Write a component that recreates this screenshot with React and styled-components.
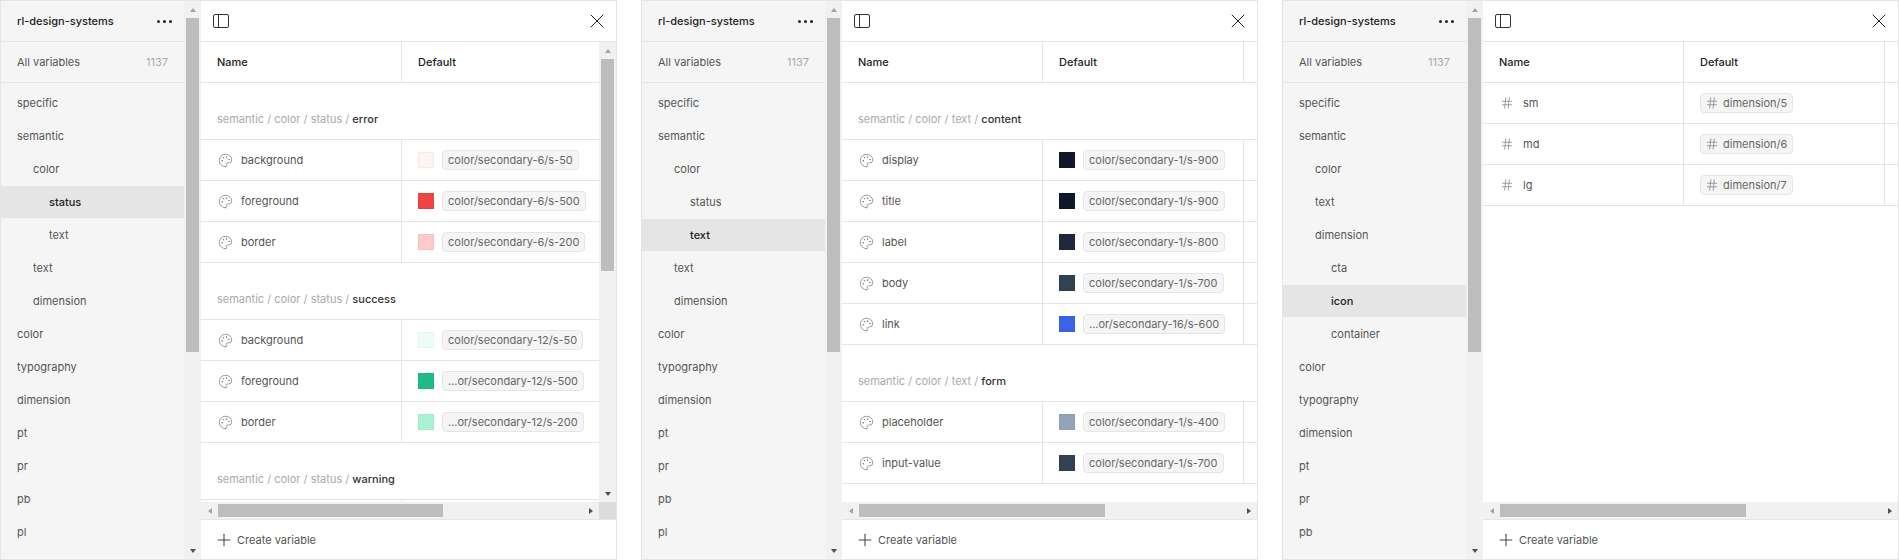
import React from "react";
import styled, { createGlobalStyle } from "styled-components";
import { Palette, Hash, X, Plus } from "lucide-react";

const GlobalStyle = createGlobalStyle`
  html, body {
    margin: 0;
    padding: 0;
    background: #fff;
  }
  body {
    font-family: Inter, "Liberation Sans", sans-serif;
    font-size: 11px;
    line-height: 16px;
    color: #555;
  }
`;

// Sidebar trees for the three panels
const topItems = ["color", "typography", "dimension", "pt", "pr", "pb", "pl"];

const sidebars = [
  [
    { label: "specific", depth: 0 },
    { label: "semantic", depth: 0 },
    { label: "color", depth: 1 },
    { label: "status", depth: 2, active: true },
    { label: "text", depth: 2 },
    { label: "text", depth: 1 },
    { label: "dimension", depth: 1 },
  ],
  [
    { label: "specific", depth: 0 },
    { label: "semantic", depth: 0 },
    { label: "color", depth: 1 },
    { label: "status", depth: 2 },
    { label: "text", depth: 2, active: true },
    { label: "text", depth: 1 },
    { label: "dimension", depth: 1 },
  ],
  [
    { label: "specific", depth: 0 },
    { label: "semantic", depth: 0 },
    { label: "color", depth: 1 },
    { label: "text", depth: 1 },
    { label: "dimension", depth: 1 },
    { label: "cta", depth: 2 },
    { label: "icon", depth: 2, active: true },
    { label: "container", depth: 2 },
  ],
];

const colorRow = (name, color, value) => ({ name, color, value });

const panels = [
  {
    thumbX: 225,
    hasVScroll: true,
    groups: [
      {
        path: "semantic / color / status / ",
        leaf: "error",
        rows: [
          colorRow("background", "#fef2f2", "color/secondary-6/s-50"),
          colorRow("foreground", "#ef4444", "color/secondary-6/s-500"),
          colorRow("border", "#fecaca", "color/secondary-6/s-200"),
        ],
      },
      {
        path: "semantic / color / status / ",
        leaf: "success",
        rows: [
          colorRow("background", "#ecfdf5", "color/secondary-12/s-50"),
          colorRow("foreground", "#20bb84", "...or/secondary-12/s-500"),
          colorRow("border", "#a7f3d0", "...or/secondary-12/s-200"),
        ],
      },
      {
        path: "semantic / color / status / ",
        leaf: "warning",
        rows: [{}],
      },
    ],
  },
  {
    thumbX: 246,
    thirdColumn: true,
    groups: [
      {
        path: "semantic / color / text / ",
        leaf: "content",
        rows: [
          colorRow("display", "#0f172a", "color/secondary-1/s-900"),
          colorRow("title", "#0f172a", "color/secondary-1/s-900"),
          colorRow("label", "#1e293b", "color/secondary-1/s-800"),
          colorRow("body", "#334155", "color/secondary-1/s-700"),
          colorRow("link", "#3b63e8", "...or/secondary-16/s-600"),
        ],
      },
      {
        path: "semantic / color / text / ",
        leaf: "form",
        rows: [
          colorRow("placeholder", "#94a3b8", "color/secondary-1/s-400"),
          colorRow("input-value", "#334155", "color/secondary-1/s-700"),
        ],
      },
    ],
  },
  {
    thumbX: 246,
    thirdColumn: true,
    groups: [
      {
        rows: [
          { name: "sm", value: "dimension/5", numeric: true },
          { name: "md", value: "dimension/6", numeric: true },
          { name: "lg", value: "dimension/7", numeric: true },
        ],
      },
    ],
  },
];

const PanelIcon = () => (
  <svg width="18" height="16" viewBox="0 0 18 16" fill="none" stroke="#333" strokeWidth="1">
    <rect x="1.5" y="1.5" width="15" height="13" rx="1.5" />
    <line x1="6.5" y1="1.5" x2="6.5" y2="14.5" />
  </svg>
);

const App = () => (
  <Page>
    <GlobalStyle />
    {panels.map((panel, index) => (
      <Panel key={index}>
        <Sidebar>
          <SideContent>
            <SideHeader>
              <Project>rl-design-systems</Project>
              <Dots>
                <i />
                <i />
                <i />
              </Dots>
            </SideHeader>
            <AllRow>
              <span>All variables</span>
              <Count>1137</Count>
            </AllRow>
            <SideList>
              {sidebars[index]
                .concat(topItems.map((label) => ({ label, depth: 0 })))
                .slice(0, 14)
                .map((item, i) => (
                  <SideItem key={i} $depth={item.depth} $active={item.active}>
                    {item.label}
                  </SideItem>
                ))}
            </SideList>
          </SideContent>
          <VScroll>
            <Arrow $dir="up" $off />
            <VThumb $size={334} />
            <Arrow $dir="down" />
          </VScroll>
        </Sidebar>

        <Main>
          <TopBar>
            <PanelIcon />
            <X size={24} strokeWidth={1} color="#222" />
          </TopBar>

          <TableArea>
            <div>
              <Row>
                <NameCell>
                  <HeadText>Name</HeadText>
                </NameCell>
                <ValueCell $third={panel.thirdColumn}>
                  <HeadText>Default</HeadText>
                </ValueCell>
              </Row>
              {panel.groups.map((group, g) => (
                <div key={g}>
                  {group.leaf && (
                    <GroupLabel>
                      {group.path}
                      <b>{group.leaf}</b>
                    </GroupLabel>
                  )}
                  {group.rows.map((row, r) => (
                    <Row key={r}>
                      <NameCell>
                        {row.name && (
                          <>
                            <TypeIcon>
                              {row.numeric ? (
                                <Hash size={14} strokeWidth={1.4} color="#8a8a8a" />
                              ) : (
                                <Palette size={15} strokeWidth={1.25} color="#808080" />
                              )}
                            </TypeIcon>
                            <VarName>{row.name}</VarName>
                          </>
                        )}
                      </NameCell>
                      <ValueCell $third={panel.thirdColumn}>
                        {row.color && <Swatch $color={row.color} />}
                        {row.value && (
                          <Chip>
                            {row.numeric && <ChipHash size={14} strokeWidth={1.4} color="#8a8a8a" />}
                            {row.value}
                          </Chip>
                        )}
                      </ValueCell>
                    </Row>
                  ))}
                </div>
              ))}
            </div>
            {panel.hasVScroll && (
              <MainVScroll>
                <Arrow $dir="up" $off />
                <VThumb $size={212} />
                <Arrow $dir="down" />
              </MainVScroll>
            )}
          </TableArea>
          <HScroll>
            <Arrow $dir="left" $off />
            <HThumb $size={panel.thumbX} />
            <Arrow $dir="right" />
            {panel.hasVScroll && <Corner />}
          </HScroll>

          <Footer>
            <Plus size={20} strokeWidth={1.25} color="#444" />
            Create variable
          </Footer>
        </Main>
      </Panel>
    ))}
  </Page>
);

const Page = styled.div`
  display: flex;
  gap: 24px;
  width: 1899px;
  height: 560px;
  overflow: hidden;
`;

const Panel = styled.section`
  display: flex;
  box-sizing: border-box;
  width: 617px;
  height: 560px;
  flex: none;
  border: 1px solid #e5e5e5;
  overflow: hidden;
`;

const Sidebar = styled.aside`
  display: flex;
  flex: none;
  width: 200px;
  background: #f5f5f5;
`;

const SideContent = styled.div`
  width: 183px;
  overflow: hidden;
`;

const SideHeader = styled.div`
  display: flex;
  align-items: center;
  justify-content: space-between;
  height: 40px;
  padding: 0 12px 0 16px;
  border-bottom: 1px solid #e5e5e5;
`;

const Project = styled.span`
  font-weight: 500;
  color: #222;
`;

const Dots = styled.span`
  display: flex;
  gap: 3px;

  i {
    display: block;
    width: 3px;
    height: 3px;
    border-radius: 50%;
    background: #222;
  }
`;

const AllRow = styled.div`
  display: flex;
  align-items: center;
  justify-content: space-between;
  height: 40px;
  padding: 0 16px;
  border-bottom: 1px solid #e5e5e5;
`;

const Count = styled.span`
  color: #aaa;
`;

const SideList = styled.div`
  padding-top: 4px;
`;

const SideItem = styled.div`
  display: flex;
  align-items: center;
  height: 32px;
  margin-bottom: 1px;
  padding-left: ${({ $depth }) => 16 + $depth * 16}px;
  background: ${({ $active }) => ($active ? "#e5e5e5" : "transparent")};
  font-weight: ${({ $active }) => ($active ? 500 : 400)};
  color: ${({ $active }) => ($active ? "#222" : "#555")};
`;

const VScroll = styled.div`
  display: flex;
  flex-direction: column;
  flex: none;
  box-sizing: border-box;
  width: 17px;
  padding: 0 2px;
  background: #f1f1f1;
`;

const MainVScroll = styled(VScroll)`
  position: absolute;
  top: 0;
  right: 0;
  bottom: 0;
`;

const Arrow = styled.span`
  display: flex;
  align-items: center;
  justify-content: center;
  flex: none;
  width: ${({ $dir }) => ($dir === "up" || $dir === "down" ? "100%" : "17px")};
  height: ${({ $dir }) => ($dir === "up" || $dir === "down" ? "17px" : "100%")};

  &::before {
    content: "";
    border-style: solid;
    border-color: transparent;
    border-width: ${({ $dir }) => ($dir === "up" || $dir === "down" ? "4px 3.5px" : "3.5px 4px")};
    border-top-width: ${({ $dir }) => ($dir === "up" ? 0 : undefined)};
    border-bottom-width: ${({ $dir }) => ($dir === "down" ? 0 : undefined)};
    border-left-width: ${({ $dir }) => ($dir === "left" ? 0 : undefined)};
    border-right-width: ${({ $dir }) => ($dir === "right" ? 0 : undefined)};
    border-bottom-color: ${({ $dir, $off }) => ($dir === "up" ? ($off ? "#a3a3a3" : "#505050") : "transparent")};
    border-top-color: ${({ $dir }) => ($dir === "down" ? "#505050" : "transparent")};
    border-right-color: ${({ $dir, $off }) => ($dir === "left" ? ($off ? "#a3a3a3" : "#505050") : "transparent")};
    border-left-color: ${({ $dir }) => ($dir === "right" ? "#505050" : "transparent")};
  }
`;

const VThumb = styled.span`
  flex: none;
  width: 13px;
  height: ${({ $size }) => $size}px;
  margin-bottom: auto;
  background: #bdbdbd;
`;

const Main = styled.main`
  display: flex;
  flex-direction: column;
  flex: 1;
  min-width: 0;
`;

const TopBar = styled.header`
  display: flex;
  align-items: center;
  justify-content: space-between;
  flex: none;
  height: 40px;
  padding: 0 7px 0 11px;
  border-bottom: 1px solid #e5e5e5;
`;

const TableArea = styled.div`
  position: relative;
  flex: 1;
  min-height: 0;
  overflow: hidden;
`;

const Row = styled.div`
  display: flex;
  height: 40px;
  border-bottom: 1px solid #e5e5e5;
`;

const NameCell = styled.div`
  display: flex;
  align-items: center;
  box-sizing: border-box;
  flex: none;
  width: 201px;
  padding-left: 16px;
  border-right: 1px solid #e5e5e5;
`;

const ValueCell = styled.div`
  display: flex;
  align-items: center;
  box-sizing: border-box;
  flex: none;
  width: 201px;
  padding-left: 16px;
  border-right: ${({ $third }) => ($third ? "1px solid #e5e5e5" : "none")};
`;

const HeadText = styled.span`
  font-weight: 500;
  color: #222;
`;

const GroupLabel = styled.div`
  display: flex;
  align-items: flex-end;
  white-space: pre;
  box-sizing: border-box;
  height: 57px;
  padding: 0 0 12px 16px;
  border-bottom: 1px solid #e5e5e5;
  color: #aaa;

  b {
    font-weight: 500;
    color: #333;
  }
`;

const TypeIcon = styled.span`
  display: flex;
  justify-content: center;
  width: 16px;
  margin-right: 8px;
`;

const VarName = styled.span`
  color: #555;
`;

const Swatch = styled.span`
  flex: none;
  width: 16px;
  height: 16px;
  margin-right: 8px;
  background: ${({ $color }) => $color};
  box-shadow: inset 0 0 0 1px rgba(0, 0, 0, 0.03);
`;

const Chip = styled.span`
  display: flex;
  align-items: center;
  gap: 4px;
  box-sizing: border-box;
  height: 20px;
  padding: 0 5px;
  border: 1px solid #e5e5e5;
  border-radius: 4px;
  background: #f5f5f5;
  color: #666;
  white-space: nowrap;
`;

const ChipHash = styled(Hash)`
  margin-left: -1px;
`;

const HScroll = styled.div`
  display: flex;
  align-items: center;
  flex: none;
  height: 17px;
  background: #f1f1f1;
`;

const HThumb = styled.span`
  flex: none;
  width: ${({ $size }) => $size}px;
  height: 13px;
  margin-right: auto;
  background: #bdbdbd;
`;

const Corner = styled.span`
  flex: none;
  width: 17px;
  height: 100%;
  background: #dcdcdc;
`;

const Footer = styled.footer`
  display: flex;
  align-items: center;
  gap: 3px;
  box-sizing: border-box;
  flex: none;
  height: 40px;
  padding-left: 13px;
  border-top: 1px solid #e5e5e5;
  color: #555;
`;

export default App;
